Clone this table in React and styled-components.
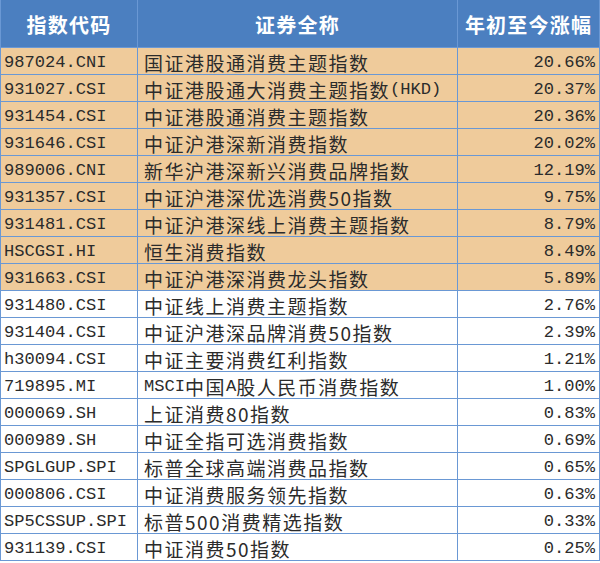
import React from "react";
import styled, { createGlobalStyle } from "styled-components";

const Global = createGlobalStyle`
  html, body { margin: 0; padding: 0; background: #ffffff; }
  body { font-family: "Liberation Mono", "Noto Sans CJK SC", monospace; }
`;

const LINE = "#6a98d4";

const Grid = styled.div`
  width: 600px;
  box-sizing: border-box;
  display: grid;
  grid-template-columns: 137px 320px 142px;
  grid-auto-rows: 27px;
  grid-template-rows: 48px;
  border-left: 1px solid ${LINE};
`;

const HeadCell = styled.div`
  box-sizing: border-box;
  background: #4b7fc0;
  border-right: 1px solid ${LINE};
  border-bottom: 1px solid ${LINE};
  display: flex;
  align-items: center;
  justify-content: center;
  color: #ffffff;
  font-family: "Noto Sans CJK SC", sans-serif;
  font-weight: 700;
  font-size: 20px;
  letter-spacing: 1.2px;
  padding-top: 2px;
`;

const Cell = styled.div`
  box-sizing: border-box;
  background: ${(p) => (p.$hl ? "#efcb9b" : "#ffffff")};
  border-right: 1px solid ${LINE};
  border-bottom: 1px solid ${LINE};
  display: flex;
  align-items: center;
  justify-content: ${(p) => (p.$right ? "flex-end" : "flex-start")};
  padding: 2px ${(p) => (p.$right ? "4px" : "0")} 0 ${(p) => (p.$right ? "0" : p.$pl)};
  color: #2b2b2b;
  white-space: nowrap;
  overflow: hidden;
`;

const Mono = styled.span`
  font-family: "Liberation Mono", monospace;
  font-size: 17.1px;
  letter-spacing: 0;
`;

const Han = styled.span`
  font-family: "Noto Sans CJK SC", sans-serif;
  font-size: 19px;
  letter-spacing: 1.5px;
  font-weight: 400;
`;

const rows = [
  ["987024.CNI", "国证港股通消费主题指数", "20.66%", true],
  ["931027.CSI", "中证港股通大消费主题指数(HKD)", "20.37%", true],
  ["931454.CSI", "中证港股通消费主题指数", "20.36%", true],
  ["931646.CSI", "中证沪港深新消费指数", "20.02%", true],
  ["989006.CNI", "新华沪港深新兴消费品牌指数", "12.19%", true],
  ["931357.CSI", "中证沪港深优选消费50指数", "9.75%", true],
  ["931481.CSI", "中证沪港深线上消费主题指数", "8.79%", true],
  ["HSCGSI.HI", "恒生消费指数", "8.49%", true],
  ["931663.CSI", "中证沪港深消费龙头指数", "5.89%", true],
  ["931480.CSI", "中证线上消费主题指数", "2.76%", false],
  ["931404.CSI", "中证沪港深品牌消费50指数", "2.39%", false],
  ["h30094.CSI", "中证主要消费红利指数", "1.21%", false],
  ["719895.MI", "MSCI中国A股人民币消费指数", "1.00%", false],
  ["000069.SH", "上证消费80指数", "0.83%", false],
  ["000989.SH", "中证全指可选消费指数", "0.69%", false],
  ["SPGLGUP.SPI", "标普全球高端消费品指数", "0.65%", false],
  ["000806.CSI", "中证消费服务领先指数", "0.63%", false],
  ["SP5CSSUP.SPI", "标普500消费精选指数", "0.33%", false],
  ["931139.CSI", "中证消费50指数", "0.25%", false],
];

function Name({ text }) {
  const parts = text.split(/([A-Za-z()]+)/).filter(Boolean);
  return (
    <>
      {parts.map((p, i) =>
        /^[A-Za-z()]+$/.test(p) ? <Mono key={i}>{p}</Mono> : <Han key={i}>{p}</Han>
      )}
    </>
  );
}

export default function App() {
  return (
    <>
      <Global />
      <Grid>
        <HeadCell>指数代码</HeadCell>
        <HeadCell>证券全称</HeadCell>
        <HeadCell>年初至今涨幅</HeadCell>
        {rows.map(([code, name, pct, hl]) => (
          <React.Fragment key={code}>
            <Cell $hl={hl} $pl="3px">
              <Mono>{code}</Mono>
            </Cell>
            <Cell $hl={hl} $pl="6px">
              <Name text={name} />
            </Cell>
            <Cell $hl={hl} $right>
              <Mono>{pct}</Mono>
            </Cell>
          </React.Fragment>
        ))}
      </Grid>
    </>
  );
}
